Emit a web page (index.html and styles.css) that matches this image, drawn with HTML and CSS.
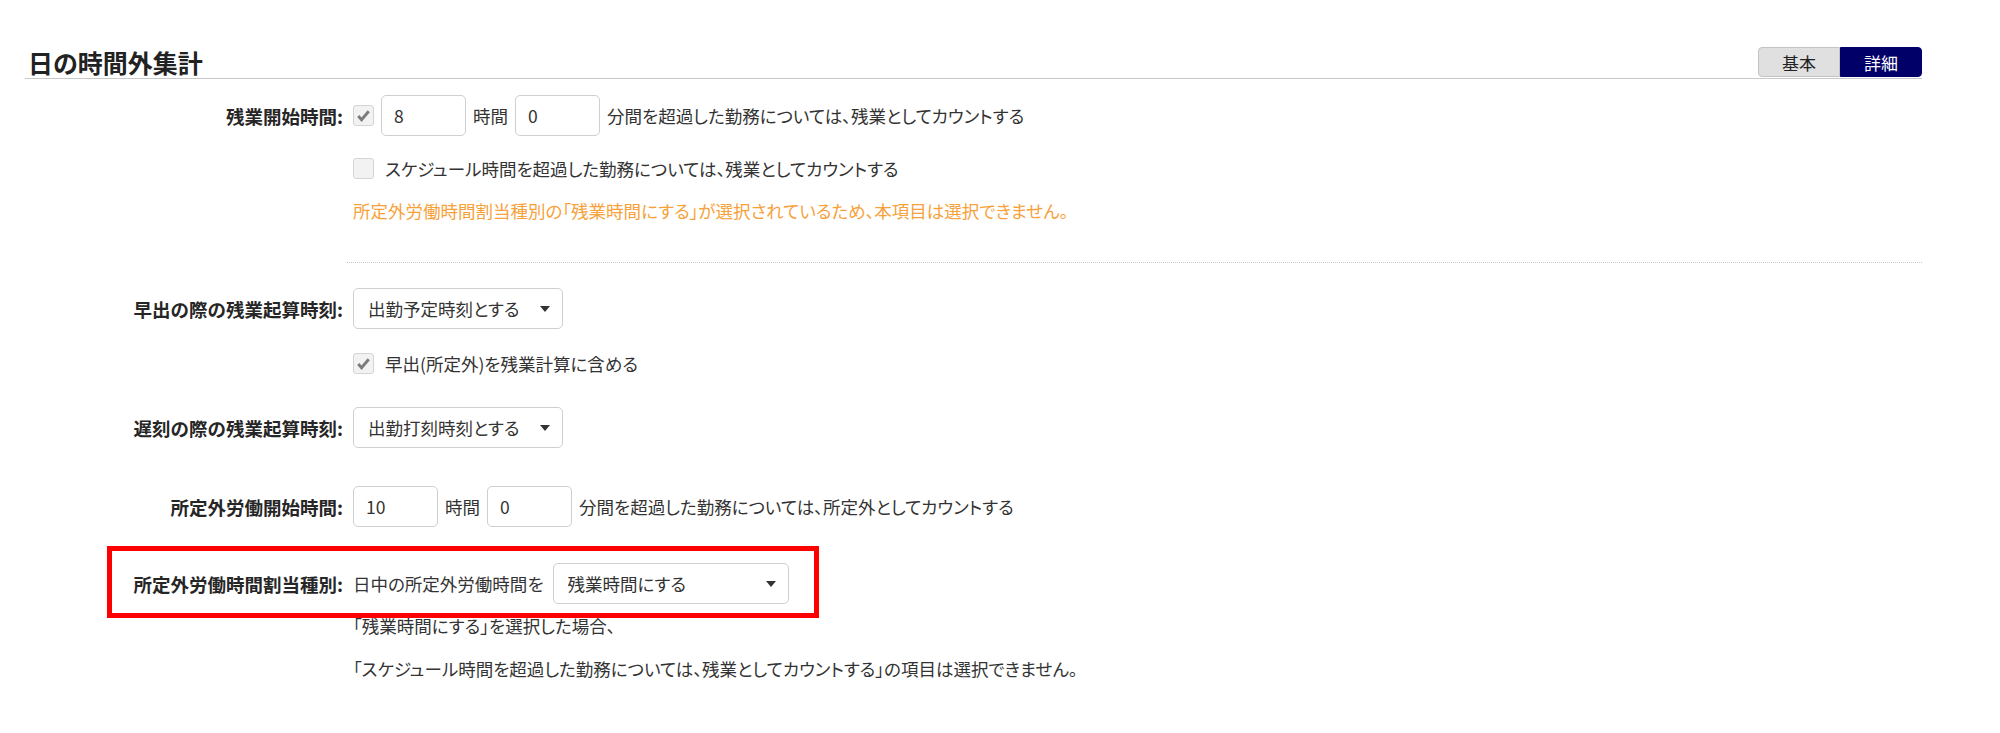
FILE: index.html
```html
<!DOCTYPE html>
<html lang="ja">
<head>
    <meta charset="UTF-8">
    <title>日の時間外集計</title>
    <link rel="stylesheet" href="styles.css">
</head>
<body>
    <div class="panel">
        <div class="panel-head">
            <h2 class="title">日の時間外集計</h2>
            <div class="toggle">
                <button class="toggle-btn">基本</button>
                <button class="toggle-btn active">詳細</button>
            </div>
        </div>

        <div class="row row-first">
            <div class="label">残業開始時間:</div>
            <div class="field">
                <span class="check checked"><svg viewBox="0 0 20 20"><path d="M4.5 10.5 L8 14.5 L15.5 5.5"/></svg></span>
                <input class="num" type="text" value="8">
                <span>時間</span>
                <input class="num" type="text" value="0">
                <span>分間を超過した勤務については、残業としてカウントする</span>
            </div>
        </div>
        <div class="row row-check">
            <div class="label"></div>
            <div class="field">
                <span class="check"></span>
                <span class="check-text">スケジュール時間を超過した勤務については、残業としてカウントする</span>
            </div>
        </div>
        <div class="row row-note">
            <div class="label"></div>
            <div class="field warn">所定外労働時間割当種別の「残業時間にする」が選択されているため、本項目は選択できません。</div>
        </div>

        <div class="divider"></div>

        <div class="row row-select1">
            <div class="label">早出の際の残業起算時刻:</div>
            <div class="field">
                <span class="select"><select><option>出勤予定時刻とする</option></select></span>
            </div>
        </div>
        <div class="row row-check2">
            <div class="label"></div>
            <div class="field">
                <span class="check checked"><svg viewBox="0 0 20 20"><path d="M4.5 10.5 L8 14.5 L15.5 5.5"/></svg></span>
                <span class="check-text">早出(所定外)を残業計算に含める</span>
            </div>
        </div>
        <div class="row row-select2">
            <div class="label">遅刻の際の残業起算時刻:</div>
            <div class="field">
                <span class="select"><select><option>出勤打刻時刻とする</option></select></span>
            </div>
        </div>
        <div class="row row-extra">
            <div class="label">所定外労働開始時間:</div>
            <div class="field">
                <input class="num" type="text" value="10">
                <span>時間</span>
                <input class="num" type="text" value="0">
                <span>分間を超過した勤務については、所定外としてカウントする</span>
            </div>
        </div>
        <div class="row row-assign">
            <div class="highlight"></div>
            <div class="label">所定外労働時間割当種別:</div>
            <div class="field gap-wide">
                <span>日中の所定外労働時間を</span>
                <span class="select select-wide"><select><option>残業時間にする</option></select></span>
            </div>
        </div>
        <div class="row row-help1">
            <div class="label"></div>
            <div class="field">「残業時間にする」を選択した場合、</div>
        </div>
        <div class="row row-help2">
            <div class="label"></div>
            <div class="field">「スケジュール時間を超過した勤務については、残業としてカウントする」の項目は選択できません。</div>
        </div>
    </div>
</body>
</html>
```

FILE: styles.css
```css
body {
    margin: 0;
    background: #fff;
    color: #333;
    font-family: "Noto Sans CJK JP", "Noto Sans", sans-serif;
    font-size: 17.5px;
    font-feature-settings: "palt";
}

.panel {
    margin: 0 78px 0 25px;
}

.panel-head {
    display: flex;
    justify-content: space-between;
    align-items: center;
    height: 31px;
    margin-top: 47px;
    border-bottom: 1px solid #c8c8c8;
}

.title {
    margin: 0 0 0 3px;
    font-size: 25px;
    font-weight: bold;
    color: #222;
    line-height: 29px;
}

.toggle {
    display: flex;
    height: 30px;
    align-self: flex-start;
}

.toggle-btn {
    font-family: inherit;
    font-size: 17px;
    font-feature-settings: "palt";
    width: 82px;
    border: 1px solid #c4c4c4;
    background: #e0e0e0;
    color: #222;
    padding: 0;
    border-radius: 4px 0 0 4px;
}

.toggle-btn.active {
    background: #000068;
    border-color: #000068;
    color: #fff;
    border-radius: 0 4px 4px 0;
}

.row {
    display: flex;
    align-items: center;
}

.label {
    width: 318px;
    flex: none;
    text-align: right;
    padding-right: 10px;
    font-size: 18.5px;
    font-weight: bold;
    font-feature-settings: normal;
    color: #262626;
}

.field {
    display: flex;
    align-items: center;
    gap: 7px;
    white-space: nowrap;
}

.gap-wide {
    gap: 9px;
}

.row-first { margin-top: 16px; height: 41px; }
.row-check { margin-top: 12px; height: 40px; }
.row-note { margin-top: 10px; height: 24px; }
.row-select1 { margin-top: 25px; height: 41px; }
.row-check2 { margin-top: 19px; height: 30px; }
.row-select2 { margin-top: 29px; height: 41px; }
.row-extra { margin-top: 38px; height: 41px; }
.row-assign { margin-top: 36px; height: 41px; position: relative; }
.row-help1 { margin-top: 9px; height: 24px; }
.row-help2 { margin-top: 19px; height: 24px; }

.warn {
    color: #f7a13b;
}

.divider {
    margin: 40px 0 0 322px;
    border-top: 1px dotted #c8c8c8;
}

.check {
    display: inline-block;
    width: 21px;
    height: 21px;
    box-sizing: border-box;
    border: 1px solid #d4d4d4;
    border-radius: 3px;
    background: #f2f2f2;
}

.check svg {
    display: block;
    width: 19px;
    height: 19px;
}

.check path {
    fill: none;
    stroke: #7c7c7c;
    stroke-width: 3;
}

.check-text {
    margin-left: 4px;
}

.num {
    width: 85px;
    height: 41px;
    box-sizing: border-box;
    border: 1px solid #cfcfcf;
    border-radius: 5px;
    padding: 0 12px;
    font-family: inherit;
    font-size: 17.5px;
    color: #333;
}

.select {
    position: relative;
    display: inline-block;
}

.select select {
    appearance: none;
    width: 210px;
    height: 41px;
    border: 1px solid #cfcfcf;
    border-radius: 5px;
    background: #fff;
    padding: 0 14px;
    font-family: inherit;
    font-size: 17.5px;
    font-feature-settings: "palt";
    color: #333;
}

.select-wide select {
    width: 236px;
}

.select::after {
    content: "";
    position: absolute;
    right: 13px;
    top: 18px;
    border-left: 5px solid transparent;
    border-right: 5px solid transparent;
    border-top: 6px solid #333;
}

.highlight {
    position: absolute;
    left: 82px;
    top: -17px;
    width: 712px;
    height: 72px;
    box-sizing: border-box;
    border: 5px solid #f00;
    pointer-events: none;
}
```
